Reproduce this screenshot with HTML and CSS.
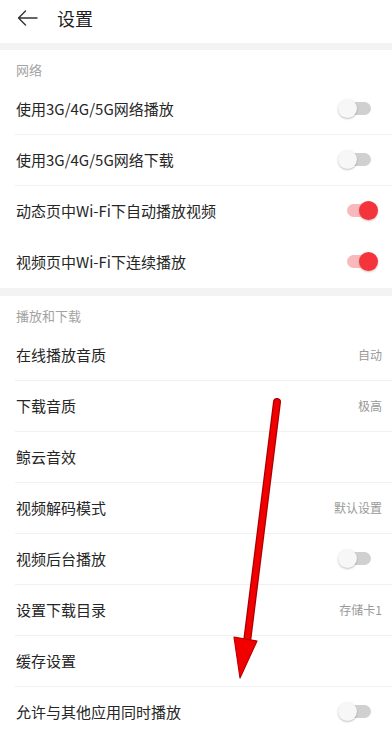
FILE: index.html
```html
<!DOCTYPE html>
<html lang="zh-CN">
<head>
    <meta charset="UTF-8">
    <title>设置</title>
    <link rel="stylesheet" href="styles.css">
</head>
<body>
    <div class="page">
        <div class="header">
            <svg class="back" width="21" height="16" viewBox="0 0 21 16">
                <path d="M20 8 H1.5 M8.5 1 L1.5 8 L8.5 15" fill="none" stroke="#333" stroke-width="1.4" stroke-linecap="round" stroke-linejoin="round"/>
            </svg>
            <div class="title">设置</div>
        </div>

        <div class="band"></div>
        <div class="section-label">网络</div>
        <div class="row"><span class="name">使用3G/4G/5G网络播放</span><span class="toggle"></span></div>
        <div class="row"><span class="name">使用3G/4G/5G网络下载</span><span class="toggle"></span></div>
        <div class="row no-line"><span class="name">动态页中Wi-Fi下自动播放视频</span><span class="toggle on"></span></div>
        <div class="row no-line"><span class="name">视频页中Wi-Fi下连续播放</span><span class="toggle on"></span></div>

        <div class="band band-b"></div>
        <div class="section-label">播放和下载</div>
        <div class="row"><span class="name">在线播放音质</span><span class="value">自动</span></div>
        <div class="row"><span class="name">下载音质</span><span class="value">极高</span></div>
        <div class="row"><span class="name">鲸云音效</span></div>
        <div class="row"><span class="name">视频解码模式</span><span class="value">默认设置</span></div>
        <div class="row"><span class="name">视频后台播放</span><span class="toggle"></span></div>
        <div class="row"><span class="name">设置下载目录</span><span class="value">存储卡1</span></div>
        <div class="row"><span class="name">缓存设置</span></div>
        <div class="row"><span class="name">允许与其他应用同时播放</span><span class="toggle"></span></div>
    </div>

    <!-- hand-drawn annotation arrow -->
    <svg class="annotation" width="392" height="733" viewBox="0 0 392 733">
        <line x1="277" y1="402" x2="247" y2="642" stroke="#a00" stroke-width="8" stroke-linecap="round"/>
        <line x1="277" y1="402" x2="247" y2="642" stroke="#f20000" stroke-width="5.5" stroke-linecap="round"/>
        <polygon points="234,637 257,641 240,678" fill="#f20000" stroke="#b00" stroke-width="1.2" stroke-linejoin="round"/>
    </svg>
</body>
</html>
```

FILE: styles.css
```css
body {
    margin: 0;
    background: #fff;
    font-family: "Noto Sans CJK SC", "Noto Sans", sans-serif;
    color: #222;
    overflow: hidden;
}

.page {
    width: 392px;
}

.header {
    height: 43px;
    display: flex;
    align-items: center;
    box-sizing: border-box;
    padding-left: 17px;
    padding-bottom: 8px;
}

.back {
    display: block;
}

.title {
    margin-left: 19px;
    font-size: 18px;
    color: #1e1e1e;
}

.band {
    height: 7px;
    background: #f3f3f3;
}

.band-b {
    height: 8px;
}

.section-label {
    height: 34px;
    box-sizing: border-box;
    padding: 10px 0 0 16px;
    font-size: 13px;
    line-height: 20px;
    color: #a3a3a3;
}

.row {
    height: 51px;
    box-sizing: border-box;
    margin-left: 15px;
    padding: 0 10px 2px 1px;
    display: flex;
    align-items: center;
    justify-content: space-between;
    border-bottom: 1px solid #f1f1f1;
}

.row.no-line {
    border-bottom-color: transparent;
}

.name {
    font-size: 15px;
    color: #262626;
}

.value {
    font-size: 12px;
    color: #999;
}

.toggle {
    position: relative;
    width: 40px;
    height: 19px;
    margin-right: 4px;
}

.toggle::before {
    content: "";
    position: absolute;
    left: 7px;
    right: 7px;
    top: 3px;
    height: 13px;
    border-radius: 7px;
    background: #d0d0d0;
}

.toggle::after {
    content: "";
    position: absolute;
    left: 0;
    top: 0;
    width: 19px;
    height: 19px;
    border-radius: 50%;
    background: #f7f7f7;
    box-shadow: 0 1px 2px rgba(0, 0, 0, 0.25);
}

.toggle.on::before {
    left: 9px;
    background: #f7b9bb;
}

.toggle.on::after {
    left: auto;
    right: 0;
    background: #f3343a;
    box-shadow: 0 1px 2px rgba(160, 0, 0, 0.3);
}

.annotation {
    position: absolute;
    left: 0;
    top: 0;
    pointer-events: none;
}
```
